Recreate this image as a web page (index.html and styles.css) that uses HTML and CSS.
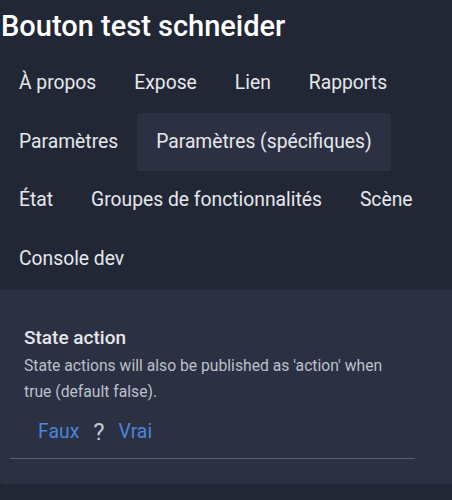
FILE: index.html
```html
<!DOCTYPE html>
<html lang="fr">
<head>
<meta charset="utf-8">
<link rel="stylesheet" href="styles.css">
</head>
<body>
<h1 class="title">Bouton test schneider</h1>
<nav class="tabs">
  <div class="tab">À propos</div>
  <div class="tab">Expose</div>
  <div class="tab">Lien</div>
  <div class="tab">Rapports</div>
  <div class="tab">Paramètres</div>
  <div class="tab active">Paramètres (spécifiques)</div>
  <div class="tab">État</div>
  <div class="tab">Groupes de fonctionnalités</div>
  <div class="tab">Scène</div>
  <div class="tab">Console dev</div>
</nav>
<section class="panel">
  <div class="setting">
    <h2 class="setting-title">State action</h2>
    <p class="setting-desc">State actions will also be published as 'action' when true (default false).</p>
    <div class="toggle">
      <span class="opt">Faux</span>
      <span class="q">?</span>
      <span class="opt">Vrai</span>
    </div>
  </div>
  <div class="divider"></div>
</section>
</body>
</html>
```
FILE: styles.css
```css
html, body {
  margin: 0;
  padding: 0;
  background: #222736;
  font-family: Roboto, "Noto Sans", sans-serif;
  color: #e4e6ea;
  width: 452px;
  height: 500px;
  overflow: hidden;
}
.title {
  margin: 0;
  padding: 8px 0 0 1px;
  height: 45px;
  box-sizing: border-box;
  font-size: 29px;
  font-weight: 500;
  color: #ffffff;
  line-height: 36px;
}
.tabs {
  display: flex;
  flex-wrap: wrap;
  padding-top: 9px;
  width: 445px;
}
.tab {
  padding: 0 19px;
  height: 58.7px;
  line-height: 58.7px;
  font-size: 19.3px;
  color: #e6e8ec;
  border-radius: 4px 4px 0 0;
  white-space: nowrap;
}
.tab.active {
  background: #2b3042;
}
.panel {
  background: #2b3042;
  height: 194px;
  margin-top: 1px;
  border-bottom-left-radius: 4px;
  padding-top: 35px;
  box-sizing: border-box;
}
.setting {
  padding: 0 24px;
}
.setting-title {
  margin: 0;
  font-size: 19px;
  font-weight: 500;
  color: #e4e6ea;
  line-height: 26px;
}
.setting-desc {
  margin: 2px 0 0;
  font-size: 15.7px;
  line-height: 26px;
  color: #bcc0ca;
  width: 370px;
}
.toggle {
  display: flex;
  align-items: center;
  gap: 14px;
  padding-left: 14px;
  margin-top: 14px;
  font-size: 19.4px;
  line-height: 26px;
}
.opt {
  color: #4a86dc;
}
.q {
  color: #c4c8d0;
  font-size: 24px;
  font-weight: 400;
}
.divider {
  margin: 13px 37px 0 10px;
  height: 1px;
  background: #5a6072;
}
```
